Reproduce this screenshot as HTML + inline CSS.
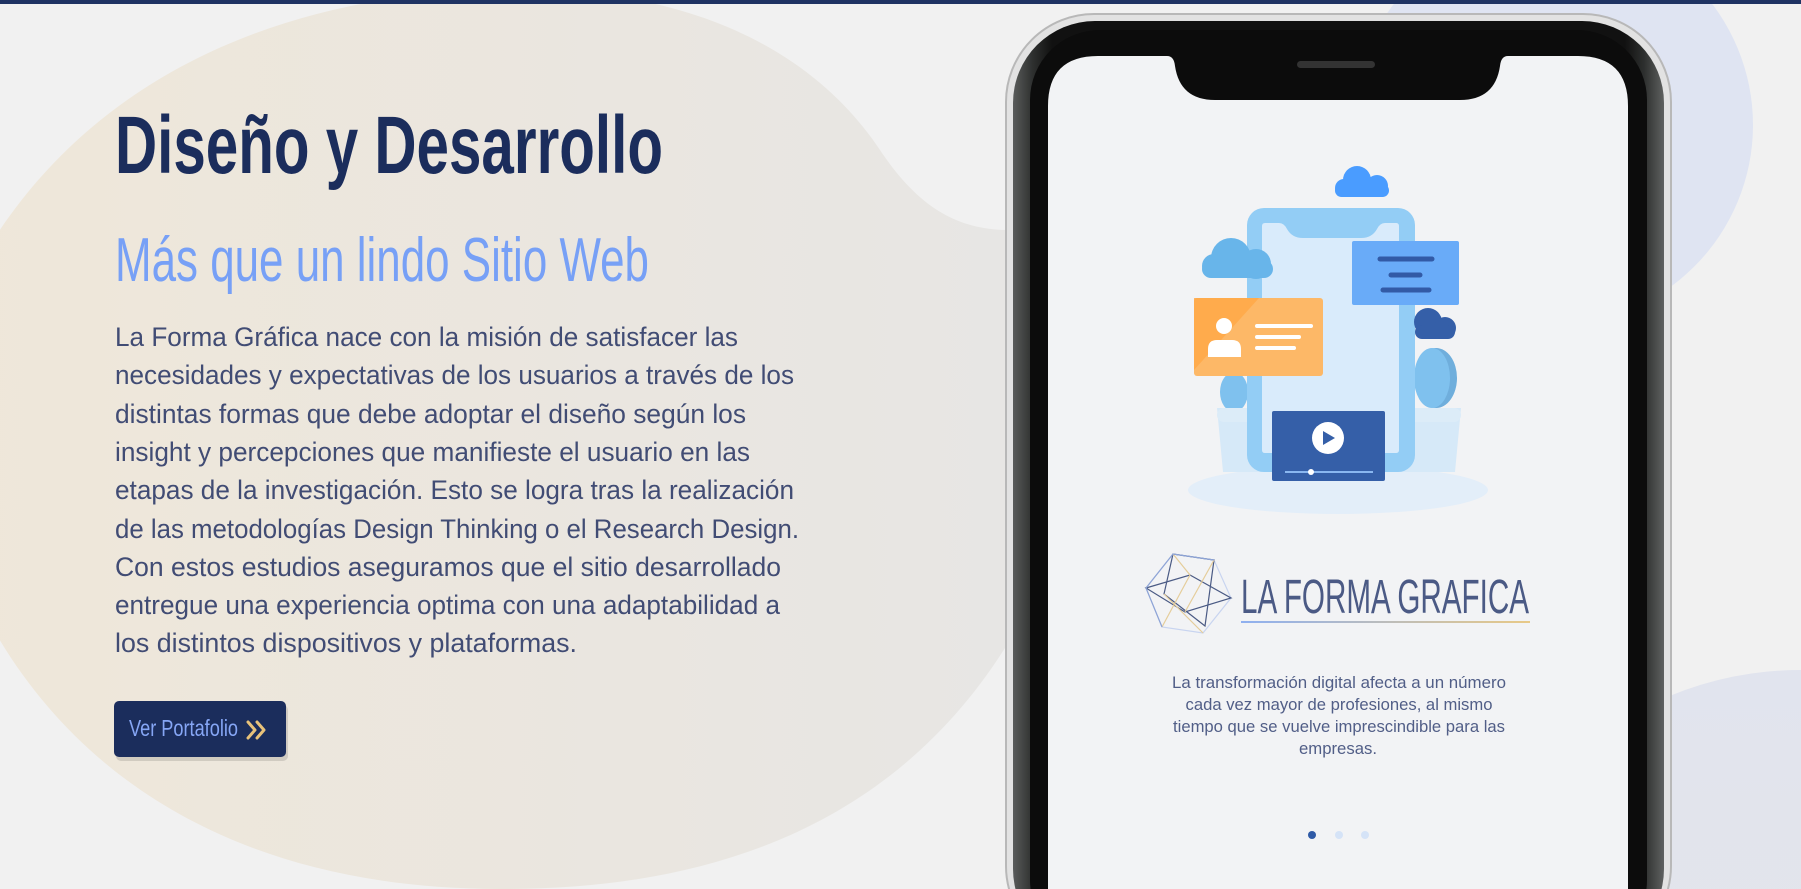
<!DOCTYPE html>
<html><head><meta charset="utf-8"><style>
html,body{margin:0;padding:0;width:1801px;height:889px;overflow:hidden;background:#f1f1f1}
svg{display:block}
</style></head><body>
<svg width="1801" height="889" viewBox="0 0 1801 889" xmlns="http://www.w3.org/2000/svg">
<defs>
<linearGradient id="beige" x1="0" y1="0" x2="1" y2="0">
<stop offset="0" stop-color="#efe7d9"/><stop offset="1" stop-color="#e7e6e4"/></linearGradient>
<linearGradient id="ul" x1="0" y1="0" x2="1" y2="0">
<stop offset="0" stop-color="#8fb0f0"/><stop offset="1" stop-color="#e8c987"/></linearGradient>
<linearGradient id="frame" x1="0" y1="0" x2="1" y2="0">
<stop offset="0" stop-color="#5a5c5b"/><stop offset="0.03" stop-color="#2e302f"/><stop offset="0.06" stop-color="#111"/><stop offset="0.94" stop-color="#111"/><stop offset="0.97" stop-color="#2e302f"/><stop offset="1" stop-color="#5f6160"/></linearGradient>
<linearGradient id="bot" x1="0" y1="0" x2="0" y2="1">
<stop offset="0" stop-color="#e1e4ee"/><stop offset="1" stop-color="#e6e6e6"/></linearGradient>
</defs>
<rect width="1801" height="889" fill="#f1f1f1"/>
<circle cx="1553" cy="125" r="200" fill="#dfe4f2"/>
<ellipse cx="1800" cy="1010" rx="340" ry="340" fill="url(#bot)"/>
<path d="M-40,300 C60,90 260,0 480,-10 C700,-20 820,60 880,150 C920,210 960,230 1010,230 L1010,640 C900,820 720,890 500,889 C220,889 40,760 -40,560 Z" fill="url(#beige)"/>
<rect x="0" y="0" width="1801" height="4" fill="#1f3363"/>

<text x="115" y="173" font-family="Liberation Sans Narrow, Liberation Sans, sans-serif" font-weight="700" font-size="82" fill="#1b2d5c" textLength="548" lengthAdjust="spacingAndGlyphs">Diseño y Desarrollo</text>
<text x="115" y="281" font-family="Liberation Sans Narrow, Liberation Sans, sans-serif" font-size="62" fill="#77a0f6" textLength="534" lengthAdjust="spacingAndGlyphs">Más que un lindo Sitio Web</text>
<g font-family="Liberation Sans Narrow, Liberation Sans, sans-serif" font-size="27" fill="#414c74">
<text x="115" y="346" textLength="623" lengthAdjust="spacingAndGlyphs">La Forma Gráfica nace con la misión de satisfacer las</text>
<text x="115" y="384" textLength="679" lengthAdjust="spacingAndGlyphs">necesidades y expectativas de los usuarios a través de los</text>
<text x="115" y="423" textLength="631" lengthAdjust="spacingAndGlyphs">distintas formas que debe adoptar el diseño según los</text>
<text x="115" y="461" textLength="635" lengthAdjust="spacingAndGlyphs">insight y percepciones que manifieste el usuario en las</text>
<text x="115" y="499" textLength="679" lengthAdjust="spacingAndGlyphs">etapas de la investigación. Esto se logra tras la realización</text>
<text x="115" y="538" textLength="684" lengthAdjust="spacingAndGlyphs">de las metodologías Design Thinking o el Research Design.</text>
<text x="115" y="576" textLength="666" lengthAdjust="spacingAndGlyphs">Con estos estudios  aseguramos que el sitio desarrollado</text>
<text x="115" y="614" textLength="665" lengthAdjust="spacingAndGlyphs">entregue una experiencia optima con una adaptabilidad a</text>
<text x="115" y="652" textLength="462" lengthAdjust="spacingAndGlyphs">los distintos dispositivos y plataformas.</text>
</g>
<rect x="116" y="705" width="172" height="56" rx="5" fill="#000" opacity="0.12"/>
<rect x="114" y="701" width="172" height="56" rx="5" fill="#1b2d5c"/>
<text x="129" y="730" dominant-baseline="middle" font-family="Liberation Sans Narrow, Liberation Sans, sans-serif" font-size="23" fill="#86a6f5" textLength="109" lengthAdjust="spacingAndGlyphs">Ver Portafolio</text>
<path d="M248,722 l7,8 l-7,8 M257,722 l7,8 l-7,8" stroke="#e8c27a" stroke-width="3" fill="none" stroke-linejoin="round" stroke-linecap="round"/>

<!-- phone -->
<rect x="1006" y="14" width="665" height="940" rx="88" fill="#e2e2e2" stroke="#b8b8b8" stroke-width="2"/>
<rect x="1013" y="21" width="651" height="930" rx="82" fill="url(#frame)"/>
<rect x="1030" y="30" width="617" height="920" rx="70" fill="#0c0c0c"/>
<path d="M1048,106 Q1048,56 1098,56 L1167,56 Q1174,56 1175,66 Q1180,100 1215,100 L1460,100 Q1495,100 1500,66 Q1501,56 1508,56 L1578,56 Q1628,56 1628,106 L1628,889 L1048,889 Z" fill="#f2f3f5"/>
<rect x="1297" y="61" width="78" height="7" rx="3.5" fill="#333"/>

<!-- illustration -->
<ellipse cx="1338" cy="490" rx="150" ry="24" fill="#e3eef9"/>
<path d="M1217,408 h244 l-6,64 h-232z" fill="#d6e9f8"/>
<ellipse cx="1436" cy="378" rx="21" ry="30" fill="#6faedc"/>
<ellipse cx="1432" cy="378" rx="18" ry="30" fill="#7fc1ee"/>
<ellipse cx="1234" cy="392" rx="14" ry="20" fill="#7fc1ee"/>
<rect x="1217" y="408" width="244" height="14" rx="7" fill="#dcecf8"/>
<rect x="1247" y="208" width="168" height="264" rx="17" fill="#93cdf5"/>
<path d="M1262,226 q0,-3 3,-3 h14 q5,0 8,6 q5,9 16,9 h58 q11,0 16,-9 q3,-6 8,-6 h11 q3,0 3,3 v224 q0,3 -3,3 h-131 q-3,0 -3,-3z" fill="#d9ebfb"/>
<g fill="#4a9cff"><circle cx="1357" cy="180" r="14"/><circle cx="1377" cy="186" r="11"/><circle cx="1344" cy="188" r="9"/><rect x="1335" y="184" width="54" height="13" rx="6.5"/></g>
<g fill="#68b5ea"><circle cx="1231" cy="258" r="20"/><circle cx="1256" cy="264" r="15"/><circle cx="1214" cy="266" r="12"/><rect x="1202" y="260" width="71" height="18" rx="9"/></g>
<rect x="1352" y="241" width="107" height="64" rx="2" fill="#69abf8"/>
<g stroke="#325aa6" stroke-width="5" stroke-linecap="round"><line x1="1380" y1="259" x2="1432" y2="259"/><line x1="1391" y1="275" x2="1420" y2="275"/><line x1="1383" y1="290" x2="1429" y2="290"/></g>
<g fill="#355fa8"><circle cx="1428" cy="322" r="14"/><circle cx="1445" cy="328" r="11"/><rect x="1415" y="325" width="40" height="14" rx="7"/></g>
<rect x="1194" y="298" width="129" height="78" rx="3" fill="#fdb867"/>
<path d="M1194,298 h65 l-65,72z" fill="#ffa846" opacity="0.8"/>
<circle cx="1224" cy="326" r="8" fill="#fff"/>
<path d="M1208,357 v-8 q0,-9 9,-9 h15 q9,0 9,9 v8z" fill="#fff"/>
<g stroke="#fff" stroke-width="4" stroke-linecap="round"><line x1="1257" y1="326" x2="1311" y2="326"/><line x1="1257" y1="337" x2="1299" y2="337"/><line x1="1257" y1="348" x2="1294" y2="348"/></g>
<rect x="1272" y="411" width="113" height="70" rx="2" fill="#355fa8"/>
<circle cx="1328" cy="438" r="16" fill="#fff"/>
<path d="M1323,431 l12,7 l-12,7z" fill="#355fa8"/>
<line x1="1285" y1="472" x2="1373" y2="472" stroke="#8ab7f0" stroke-width="2"/>
<circle cx="1311" cy="472" r="3" fill="#fff"/>

<!-- logo -->
<g fill="none" stroke-width="1.2">
<polygon points="1173,554 1214,560 1231,598 1203,633 1162,627 1146,588" stroke="#c8d4f0"/>
<path d="M1173,554 L1164,594 L1205,626 L1214,560 Z M1146,588 L1190,575 L1231,598 L1185,612 Z" stroke="#4a5a84"/>
<path d="M1173,554 L1190,575 M1214,560 L1185,612 M1164,594 L1203,633 M1162,627 L1190,575" stroke="#e5cd9a"/>
<path d="M1146,588 L1173,554 L1214,560 M1162,627 L1146,588" stroke="#8ea4d6"/>
</g>
<text x="1241" y="613" font-family="Liberation Sans Narrow, Liberation Sans, sans-serif" font-size="48" fill="#4b5a85" textLength="288" lengthAdjust="spacingAndGlyphs">LA FORMA GRAFICA</text>
<rect x="1241" y="621" width="289" height="2" fill="url(#ul)"/>
<g font-family="Liberation Sans Narrow, Liberation Sans, sans-serif" font-size="17" fill="#515e87" text-anchor="middle">
<text x="1339" y="688" textLength="334" lengthAdjust="spacingAndGlyphs">La transformación digital afecta a un número</text>
<text x="1339" y="710" textLength="307" lengthAdjust="spacingAndGlyphs">cada vez mayor de profesiones, al mismo</text>
<text x="1339" y="732" textLength="332" lengthAdjust="spacingAndGlyphs">tiempo que se vuelve imprescindible para las</text>
<text x="1338" y="754" textLength="78" lengthAdjust="spacingAndGlyphs">empresas.</text>
</g>
<circle cx="1312" cy="835" r="4" fill="#2f5aa6"/>
<circle cx="1339" cy="835" r="4" fill="#d5e3f7"/>
<circle cx="1365" cy="835" r="4" fill="#d5e3f7"/>
</svg>
</body></html>
